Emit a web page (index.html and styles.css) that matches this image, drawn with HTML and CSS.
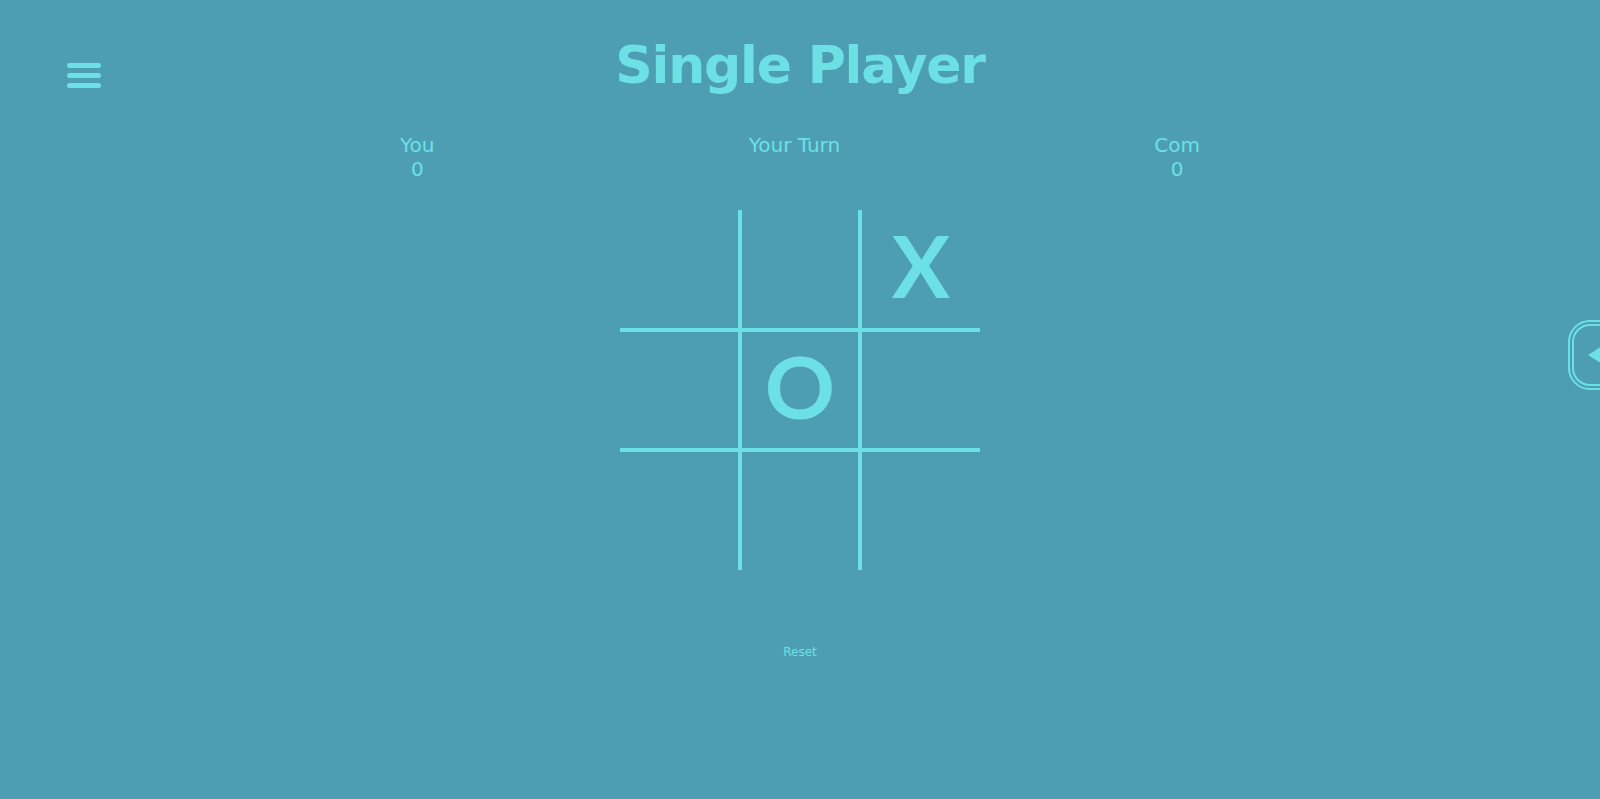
FILE: index.html
```html
<!DOCTYPE html>
<html lang="en">
<head>
<meta charset="utf-8">
<title>Single Player</title>
<link rel="stylesheet" href="styles.css">
</head>
<body>
  <header class="header">
    <div class="menu" aria-label="Menu">
      <span></span><span></span><span></span>
    </div>
    <h1 class="title">Single Player</h1>
    <div class="spacer"></div>
  </header>

  <section class="scores">
    <div class="score">
      <div>You</div>
      <div>0</div>
    </div>
    <div class="score">
      <div>Your Turn</div>
    </div>
    <div class="score">
      <div>Com</div>
      <div>0</div>
    </div>
  </section>

  <main class="board">
    <div class="cell"></div>
    <div class="cell"></div>
    <div class="cell"><span class="mark">X</span></div>
    <div class="cell"></div>
    <div class="cell"><span class="mark">O</span></div>
    <div class="cell"></div>
    <div class="cell"></div>
    <div class="cell"></div>
    <div class="cell"></div>
  </main>

  <button class="reset" type="button">Reset</button>

  <div class="side-tab" aria-label="Open panel"><span class="arrow"></span></div>
</body>
</html>
```

FILE: styles.css
```css
html, body {
  margin: 0;
  padding: 0;
}

body {
  background: #4d9eb2;
  color: #6de0e6;
  font-family: "DejaVu Sans", Verdana, sans-serif;
  height: 799px;
  overflow: hidden;
}

.header {
  display: grid;
  grid-template-columns: 1fr auto 1fr;
  padding-top: 35px;
  height: 61px;
}

.menu {
  margin: 28px 0 0 67px;
  width: 34px;
  display: flex;
  flex-direction: column;
  gap: 5px;
  align-self: start;
}

.menu span {
  display: block;
  height: 5px;
  border-radius: 3px;
  background: #6de0e6;
}

.title {
  margin: 0;
  font-size: 52px;
  font-weight: bold;
  letter-spacing: -1.2px;
  line-height: 60px;
}

.scores {
  width: 800px;
  margin: 37px auto 0;
  display: flex;
  justify-content: space-between;
  font-size: 20px;
  line-height: 24px;
  text-align: center;
}

.board {
  width: 360px;
  margin: 29px auto 0;
  display: grid;
  grid-template-columns: repeat(3, 120px);
  grid-template-rows: repeat(3, 120px);
}

.cell {
  box-sizing: border-box;
  border: 0 solid #6de0e6;
  display: flex;
  align-items: center;
  justify-content: center;
}

.cell:not(:nth-child(3n)) { border-right-width: 2px; }
.cell:not(:nth-child(3n+1)) { border-left-width: 2px; }
.cell:nth-child(-n+6) { border-bottom-width: 2px; }
.cell:nth-child(n+4) { border-top-width: 2px; }

.mark {
  font-family: Lato, "DejaVu Sans", sans-serif;
  font-weight: bold;
  font-size: 87px;
  line-height: 1;
  padding-bottom: 9px;
}

.reset {
  display: block;
  margin: 75px auto 0;
  padding: 0;
  border: none;
  background: none;
  color: #6de0e6;
  font-family: "DejaVu Sans", Verdana, sans-serif;
  font-size: 12px;
  cursor: pointer;
}

.side-tab {
  position: fixed;
  top: 320px;
  left: 1568px;
  width: 64px;
  height: 70px;
  box-sizing: border-box;
  border: 6px double #6de0e6;
  border-radius: 22px;
}

.arrow {
  position: absolute;
  left: 14px;
  top: 50%;
  transform: translateY(-50%);
  width: 0;
  height: 0;
  border-top: 14px solid transparent;
  border-bottom: 14px solid transparent;
  border-right: 22px solid #6de0e6;
}
```
